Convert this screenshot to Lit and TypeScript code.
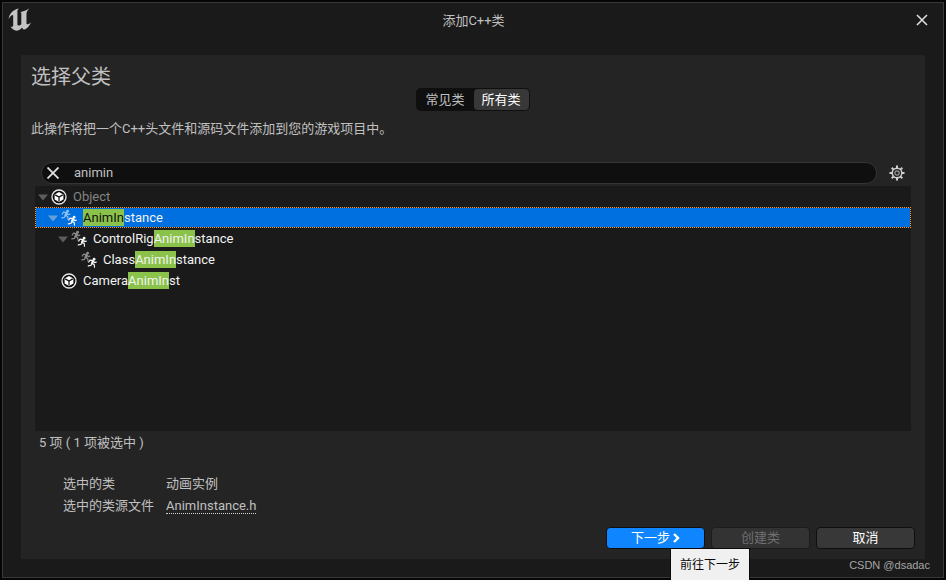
import { LitElement, html, css, svg, nothing } from "lit";
import { customElement, property, state } from "lit/decorators.js";

interface ClassRow {
  name: string;
  depth: number;
  icon: "object" | "anim";
  expandable: boolean;
  dimmed?: boolean;
}

const ROWS: ClassRow[] = [
  { name: "Object", depth: 0, icon: "object", expandable: true, dimmed: true },
  { name: "AnimInstance", depth: 1, icon: "anim", expandable: true },
  { name: "ControlRigAnimInstance", depth: 2, icon: "anim", expandable: true },
  { name: "ClassAnimInstance", depth: 3, icon: "anim", expandable: false },
  { name: "CameraAnimInst", depth: 1, icon: "object", expandable: false },
];

const runner = svg`
  <circle cx="6.6" cy="1.2" r="1.4" fill="currentColor" stroke="none" />
  <path d="M5.6 3 4.6 5.2" stroke-width="2.4" />
  <path d="M5.2 2.6 2.6 2.2 1.2 4M6 3.2 7 4.6 8.8 4.2M4.8 5.4 6.8 6.8 7 9.2M4.3 5.6 3.4 7.4 .8 7.8" stroke-width="1.2" />`;

const animIcon = html`<svg class="icon" viewBox="0 0 16 16" aria-hidden="true">
  <g class="back" fill="none" stroke="currentColor" stroke-linecap="round" stroke-linejoin="round">${runner}</g>
  <g transform="translate(6.5 6)" fill="none" stroke="currentColor" stroke-linecap="round" stroke-linejoin="round">${runner}</g>
</svg>`;

const objectIcon = html`<svg class="icon" viewBox="0 0 16 16" aria-hidden="true">
  <circle cx="8" cy="8" r="7" fill="#0c0c0c" stroke="#e8e8e8" stroke-width="1.3" />
  <path d="M8 3 12.4 5.4V10.5L8 13 3.6 10.5V5.4Z" fill="#fff" />
  <path d="M4.2 5.9 8 8 11.8 5.9M8 8V12.4" fill="none" stroke="#0c0c0c" stroke-width="1.2" />
</svg>`;

@customElement("class-row")
export class ClassRowElement extends LitElement {
  @property({ attribute: false }) row!: ClassRow;
  @property() query = "";
  @property({ type: Boolean, reflect: true }) selected = false;

  static styles = css`
    :host {
      display: block;
      color: #f2f2f2;
    }
    .row {
      display: flex;
      align-items: center;
      box-sizing: border-box;
      height: 21px;
      border: 1px solid transparent;
      white-space: nowrap;
      cursor: default;
    }
    .indent {
      flex: none;
      width: calc(var(--depth) * 10px);
    }
    .arrow {
      flex: none;
      width: 14px;
      height: 14px;
      margin-right: 1px;
      fill: #5c5c5c;
    }
    .icon {
      flex: none;
      width: 16px;
      height: 16px;
      margin-right: 6px;
      overflow: visible;
    }
    .back {
      color: #8c8c8c;
    }
    .dimmed {
      color: #848484;
    }
    mark {
      padding: 1px 0;
      background: #8bc34a;
      color: inherit;
    }
    :host([selected]) .row {
      background: #0070e0 padding-box;
      border: 1px dotted #ff9a1f;
    }
    :host([selected]) .arrow {
      fill: #669fd9;
    }
    :host([selected]) .back {
      color: #8fc0f5;
    }
    :host([selected]) mark {
      color: #101010;
    }
  `;

  private label() {
    const { name } = this.row;
    const at = this.query ? name.toLowerCase().indexOf(this.query.toLowerCase()) : -1;
    if (at < 0) return name;
    const end = at + this.query.length;
    return html`${name.slice(0, at)}<mark>${name.slice(at, end)}</mark>${name.slice(end)}`;
  }

  render() {
    const { row } = this;
    return html`<div class="row">
      <span class="indent" style="--depth:${row.depth}"></span>
      <svg class="arrow" viewBox="0 0 14 14" aria-hidden="true">
        ${row.expandable ? svg`<path d="M2 4.5H12L7 10.5Z" />` : nothing}
      </svg>
      ${row.icon === "anim" ? animIcon : objectIcon}
      <span class=${row.dimmed ? "dimmed" : ""}>${this.label()}</span>
    </div>`;
  }
}

@customElement("app-root")
export class AppRoot extends LitElement {
  @state() private query = "animin";
  @state() private selected = "AnimInstance";
  @state() private tab = "所有类";

  static styles = css`
    :host {
      display: block;
      background: #060606;
      color: #c0c0c0;
      font: 13px/20px Roboto, "Noto Sans CJK SC", sans-serif;
    }
    * {
      box-sizing: border-box;
    }
    button,
    input {
      font: inherit;
      color: inherit;
      margin: 0;
      padding: 0;
      border: 0;
      background: none;
    }
    .screen {
      position: relative;
      display: flex;
      min-height: 100vh;
      padding: 2px;
      overflow: hidden;
    }
    .window {
      flex: 1;
      display: flex;
      flex-direction: column;
      min-width: 0;
      padding: 0 18px 18px;
      border: 1px solid #383838;
      background: #1a1a1a;
    }
    .titlebar {
      display: grid;
      grid-template-columns: 1fr auto 1fr;
      align-items: start;
      height: 52px;
      margin: 0 -14px 0 -13px;
    }
    .logo {
      width: 24px;
      height: 24px;
      margin-top: 4px;
      fill: #c4c4c4;
    }
    .title {
      margin: 0;
      padding-top: 8px;
      font: inherit;
    }
    .close {
      justify-self: end;
      display: flex;
      padding: 11px;
    }
    .close svg {
      width: 12px;
      height: 12px;
      stroke: #dcdcdc;
      stroke-width: 1.6;
    }
    .panel {
      flex: 1;
      display: flex;
      flex-direction: column;
      padding: 11px 10px 10px;
      background: #242424;
    }
    h2 {
      margin: 0;
      font-size: 20px;
      line-height: 22px;
      font-weight: 400;
    }
    .tabs {
      align-self: center;
      display: flex;
      gap: 1px;
      height: 23px;
      padding: 1px;
      border-radius: 5px;
      background: #0f0f0f;
    }
    .tabs button {
      padding: 0 8px;
      line-height: 21px;
      border-radius: 4px;
    }
    .tabs button[aria-pressed="true"] {
      background: #383838;
      color: #fff;
    }
    .note {
      margin: 8px 0 23px;
    }
    .searchbar {
      display: flex;
      align-items: center;
      gap: 12px;
      margin: 0 4px 2px 10px;
    }
    .search {
      flex: 1;
      display: flex;
      align-items: center;
      gap: 15px;
      height: 22px;
      padding: 0 5px;
      border: 1px solid #353535;
      border-radius: 11px;
      background: #0f0f0f;
    }
    .search input {
      flex: 1;
      min-width: 0;
      height: 20px;
      outline: none;
    }
    .clear,
    .settings {
      display: flex;
    }
    .clear svg {
      width: 12px;
      height: 12px;
      stroke: #e0e0e0;
      stroke-width: 1.8;
    }
    .settings {
      padding-right: 6px;
    }
    .settings svg {
      width: 16px;
      height: 16px;
    }
    .tree {
      flex: 1;
      margin: 0 4px;
      background: #1a1a1a;
    }
    .count {
      margin: 2px 8px 21px;
    }
    .details {
      display: grid;
      grid-template-columns: max-content auto;
      gap: 2px 12px;
      justify-content: start;
      margin: 0 32px 11px;
    }
    .details dt,
    .details dd {
      margin: 0;
    }
    .details a {
      display: inline-block;
      line-height: 15px;
      color: inherit;
      text-decoration: none;
      border-bottom: 1px dotted #d0d0d0;
    }
    .actions {
      display: flex;
      justify-content: flex-end;
      gap: 6px;
    }
    .anchor {
      position: relative;
    }
    .action {
      display: flex;
      align-items: center;
      justify-content: center;
      gap: 2px;
      width: 99px;
      height: 22px;
      border: 1px solid #0f0f0f;
      border-radius: 4px;
      background: #383838;
      color: #fff;
    }
    .action:disabled {
      border-color: #1c1c1c;
      background: #333;
      color: #707070;
    }
    .primary {
      background: #0f86ff;
    }
    .primary svg {
      width: 8px;
      height: 10px;
      fill: none;
      stroke: #fff;
      stroke-width: 2.4;
    }
    .tip {
      position: absolute;
      z-index: 1;
      top: 21px;
      left: 64px;
      padding: 6px 9px;
      border: 1px solid #0a0a0a;
      background: #f0f0f0;
      color: #0a0a0a;
      font-size: 12px;
      white-space: nowrap;
    }
    .watermark {
      position: absolute;
      right: 16px;
      bottom: 5px;
      font: 11px/20px "Liberation Sans", sans-serif;
      color: #a6a6a6;
    }
  `;

  render() {
    return html`<div class="screen">
      <main class="window">
        <header class="titlebar">
          <svg class="logo" viewBox="22 20 72 74" aria-hidden="true">
            <path
              d="M23 57C25 41 36 29 54 25L50 31V73C50 78 56 79 62 73V40C62 37 61 36 58 36C68 34 78 31 87 24C81 31 78 35 78 41V70C78 76 85 74 92 67C88 78 80 87 70 90L64 84C60 89 55 92 48 93C39 92 32 87 29 80C34 82 37 80 37 77V47C37 41 29 46 23 57Z"
            />
          </svg>
          <h1 class="title">添加C++类</h1>
          <button class="close" aria-label="关闭">
            <svg viewBox="0 0 12 12"><path d="M1 1 11 11M11 1 1 11" /></svg>
          </button>
        </header>
        <section class="panel">
          <h2>选择父类</h2>
          <div class="tabs">
            ${["常见类", "所有类"].map(
              (t) => html`<button aria-pressed=${t === this.tab} @click=${() => (this.tab = t)}>${t}</button>`,
            )}
          </div>
          <p class="note">此操作将把一个C++头文件和源码文件添加到您的游戏项目中。</p>
          <div class="searchbar">
            <div class="search">
              <button class="clear" aria-label="清除" @click=${() => (this.query = "")}>
                <svg viewBox="0 0 12 12"><path d="M0.5 0.5 11.5 11.5M11.5 0.5 0.5 11.5" /></svg>
              </button>
              <input
                aria-label="搜索"
                .value=${this.query}
                @input=${(e: Event) => (this.query = (e.target as HTMLInputElement).value)}
              />
            </div>
            <button class="settings" aria-label="设置">
              <svg viewBox="0 0 16 16" fill="none" stroke="#d0d0d0">
                <circle cx="8" cy="8" r="4.8" stroke-width="1.4" />
                <circle cx="8" cy="8" r="2.2" stroke="#999" stroke-width="1.2" />
                <path
                  d="M8 .5V3M8 13V15.5M.5 8H3M13 8H15.5M2.7 2.7 4.4 4.4M11.6 11.6 13.3 13.3M2.7 13.3 4.4 11.6M11.6 4.4 13.3 2.7"
                  stroke-width="2"
                />
              </svg>
            </button>
          </div>
          <div class="tree" role="tree">
            ${ROWS.map(
              (row) => html`<class-row
                role="treeitem"
                aria-level=${row.depth + 1}
                aria-selected=${row.name === this.selected}
                .row=${row}
                .query=${this.query}
                ?selected=${row.name === this.selected}
                @click=${() => (this.selected = row.name)}
              ></class-row>`,
            )}
          </div>
          <p class="count">5 项 ( 1 项被选中 )</p>
          <dl class="details">
            <dt>选中的类</dt>
            <dd>动画实例</dd>
            <dt>选中的类源文件</dt>
            <dd><a href="#AnimInstance.h">AnimInstance.h</a></dd>
          </dl>
          <footer class="actions">
            <div class="anchor">
              <button class="action primary" aria-describedby="next-tip">
                下一步<svg viewBox="0 0 8 10" aria-hidden="true"><path d="M2 1 6 5 2 9" /></svg>
              </button>
              <div class="tip" id="next-tip" role="tooltip">前往下一步</div>
            </div>
            <button class="action" disabled>创建类</button>
            <button class="action">取消</button>
          </footer>
        </section>
      </main>
      <span class="watermark">CSDN @dsadac</span>
    </div>`;
  }
}
